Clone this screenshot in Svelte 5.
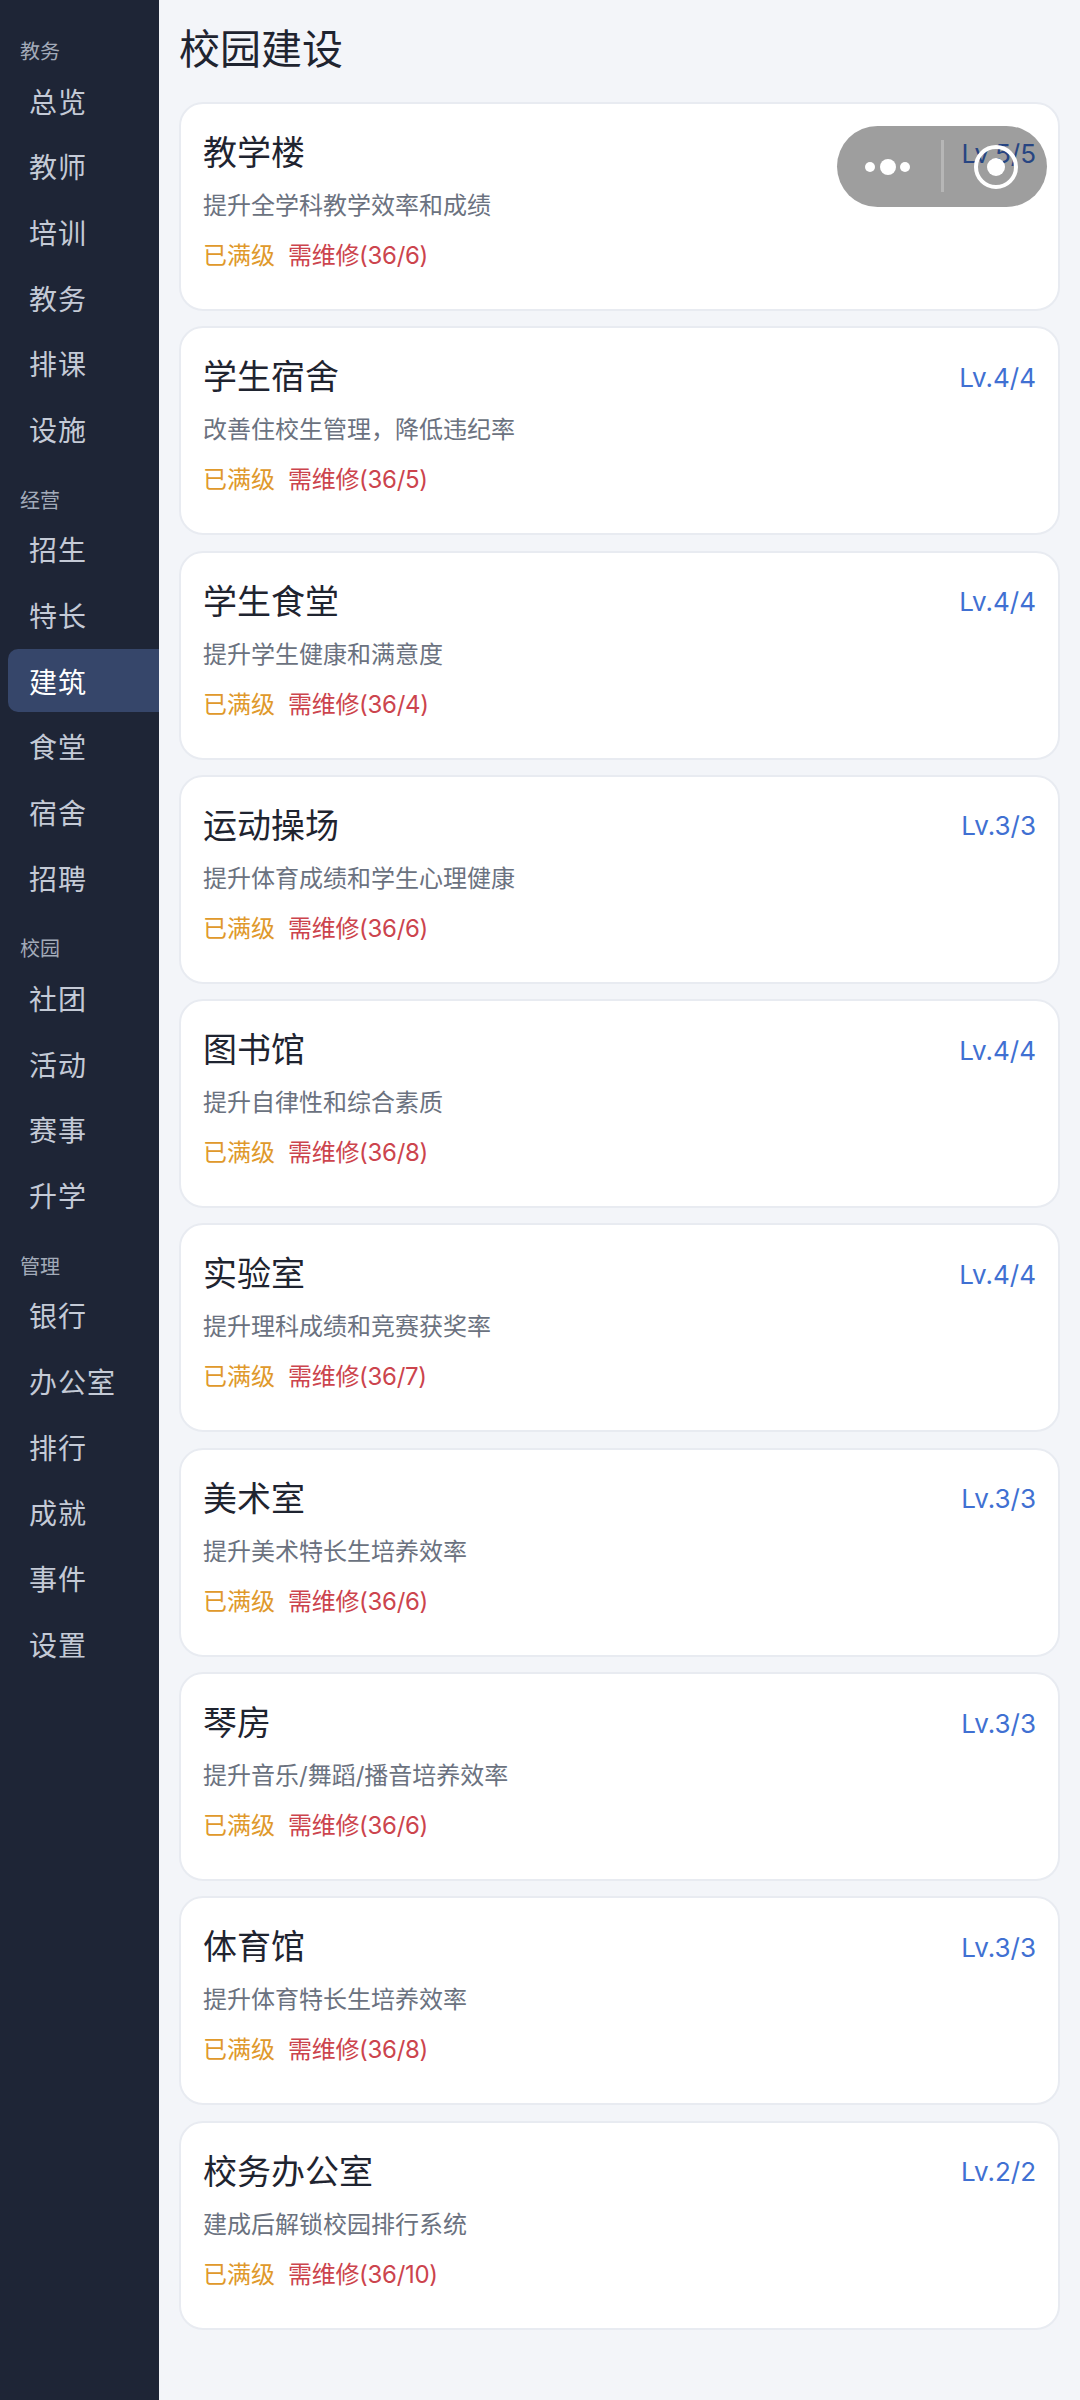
<script>
  const nav = [
    { label: "教务", items: ["总览", "教师", "培训", "教务", "排课", "设施"] },
    { label: "经营", items: ["招生", "特长", "建筑", "食堂", "宿舍", "招聘"] },
    { label: "校园", items: ["社团", "活动", "赛事", "升学"] },
    { label: "管理", items: ["银行", "办公室", "排行", "成就", "事件", "设置"] },
  ];

  const buildings = [
    { name: "教学楼", desc: "提升全学科教学效率和成绩", level: "Lv.5/5", repair: "36/6" },
    { name: "学生宿舍", desc: "改善住校生管理，降低违纪率", level: "Lv.4/4", repair: "36/5" },
    { name: "学生食堂", desc: "提升学生健康和满意度", level: "Lv.4/4", repair: "36/4" },
    { name: "运动操场", desc: "提升体育成绩和学生心理健康", level: "Lv.3/3", repair: "36/6" },
    { name: "图书馆", desc: "提升自律性和综合素质", level: "Lv.4/4", repair: "36/8" },
    { name: "实验室", desc: "提升理科成绩和竞赛获奖率", level: "Lv.4/4", repair: "36/7" },
    { name: "美术室", desc: "提升美术特长生培养效率", level: "Lv.3/3", repair: "36/6" },
    { name: "琴房", desc: "提升音乐/舞蹈/播音培养效率", level: "Lv.3/3", repair: "36/6" },
    { name: "体育馆", desc: "提升体育特长生培养效率", level: "Lv.3/3", repair: "36/8" },
    { name: "校务办公室", desc: "建成后解锁校园排行系统", level: "Lv.2/2", repair: "36/10" },
  ];
</script>

<div class="page">
  <aside class="sidebar">
    {#each nav as group}
      <div class="group-label">{group.label}</div>
      {#each group.items as item}
        <div class="nav-item" class:active={item === "建筑"}>{item}</div>
      {/each}
    {/each}
  </aside>

  <main class="content">
    <h1 class="title">校园建设</h1>
    {#each buildings as b}
      <section class="card">
        <div class="card-head">
          <span class="name">{b.name}</span>
          <span class="level">{b.level}</span>
        </div>
        <div class="desc">{b.desc}</div>
        <div class="tags">
          <span class="maxed">已满级</span>
          <span class="repair">需维修({b.repair})</span>
        </div>
      </section>
    {/each}
  </main>

  <!-- Mini program capsule -->
  <div class="capsule">
    <svg width="210" height="81" viewBox="0 0 210 81" fill="none">
      <circle cx="33" cy="41" r="5" fill="#fff" />
      <circle cx="51" cy="41" r="8" fill="#fff" />
      <circle cx="68" cy="41" r="5" fill="#fff" />
      <rect x="104" y="14" width="3" height="52" fill="#fff" opacity="0.25" />
      <circle cx="159" cy="41" r="20" stroke="#fff" stroke-width="4" />
      <circle cx="159" cy="41" r="9" fill="#fff" />
    </svg>
  </div>
</div>

<style>
  :global(body) {
    margin: 0;
    background: #f3f5f9;
  }

  .page {
    position: relative;
    display: flex;
    width: 1080px;
    height: 2400px;
    overflow: hidden;
    font-family: Inter, "Noto Sans CJK SC", sans-serif;
  }

  .sidebar {
    width: 159px;
    flex-shrink: 0;
    box-sizing: border-box;
    padding: 36px 0 0 8px;
    background: #1e2536;
  }

  .group-label {
    height: 32px;
    line-height: 32px;
    margin-bottom: 0.5px;
    padding-left: 12px;
    font-size: 20px;
    color: #a3abb9;
  }

  .nav-item + .group-label {
    margin-top: 24.8px;
  }

  .nav-item {
    height: 63px;
    line-height: 69px;
    margin-bottom: 2.7px;
    padding-left: 21px;
    font-size: 28px;
    letter-spacing: 1px;
    color: #c4cad6;
    border-radius: 10px 0 0 10px;
  }

  .nav-item.active {
    background: #36466a;
    color: #fff;
  }

  .content {
    flex: 1;
    padding: 0 20px;
  }

  .title {
    margin: 0;
    height: 102px;
    line-height: 98px;
    font-size: 41px;
    font-weight: 400;
    color: #1f2430;
  }

  .card {
    box-sizing: border-box;
    height: 209px;
    margin-bottom: 15.3px;
    padding: 26px 22px 0;
    background: #fff;
    border: 2px solid #e8ebf1;
    border-radius: 24px;
  }

  .card-head {
    display: flex;
    justify-content: space-between;
    align-items: center;
    height: 46px;
  }

  .name {
    margin-bottom: 5px;
    font-size: 34px;
    color: #1f2430;
  }

  .level {
    font-size: 26px;
    color: #4070d2;
  }

  .desc {
    margin-top: 14px;
    font-size: 24px;
    line-height: 32px;
    color: #6b7280;
  }

  .tags {
    display: flex;
    gap: 13px;
    margin-top: 18px;
    font-size: 24px;
    line-height: 32px;
  }

  .maxed {
    color: #e0992b;
  }

  .repair {
    color: #cc444d;
    letter-spacing: -0.3px;
  }

  .capsule {
    position: absolute;
    left: 837px;
    top: 126px;
    width: 210px;
    height: 81px;
    border-radius: 41px;
    background: rgba(0, 0, 0, 0.38);
  }

  .capsule svg {
    display: block;
  }
</style>
